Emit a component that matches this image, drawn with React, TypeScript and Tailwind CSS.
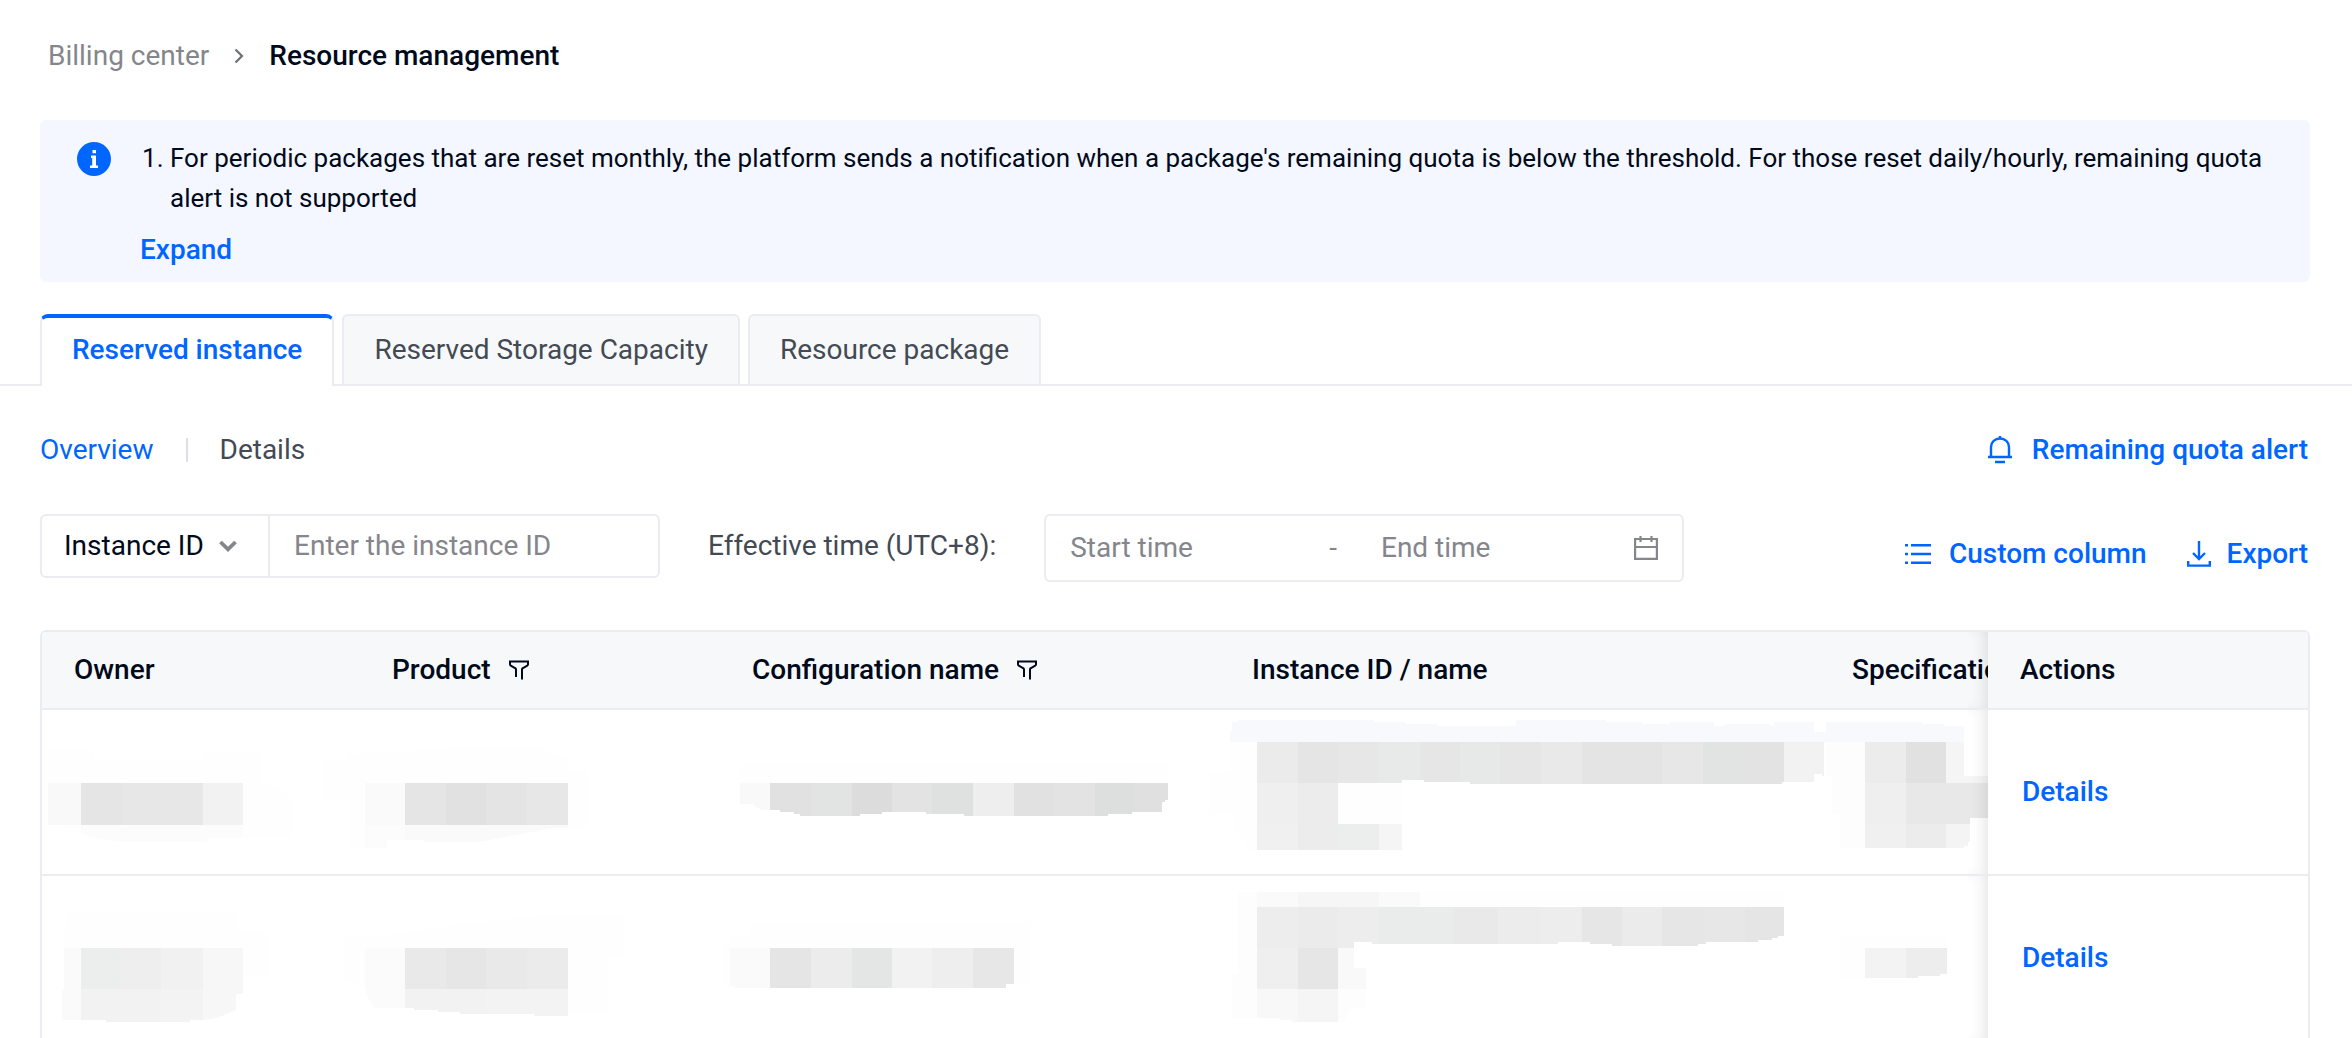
import React, { useId } from 'react';

type Tile = [x: number, y: number, w: number, h: number, fill: string];

interface MosaicProps {
  label: string;
  clip: string;
  tiles: Tile[];
}

// Pixelated block that hides a private value
const Mosaic: React.FC<MosaicProps> = ({ label, clip, tiles }) => {
  const id = useId();
  return (
    <svg role="img" aria-label={label} className="block h-[164px] w-full overflow-visible" shapeRendering="crispEdges">
      <clipPath id={id}><path d={clip} /></clipPath>
      <g clipPath={`url(#${id})`}>
        {tiles.map(([x, y, w, h, fill]) => <rect key={`${x}-${y}`} x={x} y={y} width={w} height={h} fill={fill} />)}
      </g>
    </svg>
  );
};

const rows: MosaicProps[][] = [
  [
    {
      label: 'Hidden owner',
      clip: 'M6 40H52V51H161V43H218V70L250 87V128H165V132H78L50 128L25 118V115H6Z',
      tiles: [
        [6, 40, 245, 100, '#fefefe'], [39, 115, 162, 17, '#fcfcfc'],
        [6, 73, 33, 42, '#f9f9f9'], [39, 73, 41, 42, '#e5e5e5'], [80, 73, 81, 42, '#e7e7e7'], [161, 73, 40, 42, '#f2f2f2'],
      ],
    },
    {
      label: 'Hidden product',
      clip: 'M-37 50H-13V44L100 38H182L208 50V60H228V118H196L172 122L150 126L130 130L118 132H64V130H27V138H-10V90H-37Z',
      tiles: [
        [-37, 38, 266, 100, '#fefefe'], [5, 115, 40, 23, '#fcfcfc'], [45, 115, 163, 20, '#fafafa'],
        [5, 73, 40, 42, '#fafafa'], [45, 73, 41, 42, '#e5e5e5'], [86, 73, 40, 42, '#e1e1e1'], [126, 73, 41, 42, '#e4e4e4'], [167, 73, 41, 42, '#e7e7e7'],
      ],
    },
    {
      label: 'Hidden configuration name',
      clip: 'M20 54H448V90H445V92H442V102H412V104H388V106H244V104H206V102H162V104H140V106H80V104H74V102H60V100H40V98H36V96H34V94H20Z',
      tiles: [
        [20, 54, 428, 19, '#fefefe'],
        [20, 73, 30, 33, '#f9f9f9'], [50, 73, 41, 33, '#e1e1e1'], [91, 73, 41, 33, '#e1e4e3'], [132, 73, 40, 33, '#dcdcdc'],
        [172, 73, 40, 33, '#e3e3e3'], [212, 73, 41, 33, '#dee1e0'], [253, 73, 41, 33, '#eeeeee'], [294, 73, 40, 33, '#e1e1e1'],
        [334, 73, 41, 33, '#e3e3e3'], [375, 73, 40, 33, '#dcdfde'], [415, 73, 33, 33, '#e0e0e0'],
      ],
    },
    {
      label: 'Hidden instance',
      clip: 'M10 21H12V12H18V10H154V12H186V14H218V16H296V10H386V12H422V14H450V12H494V16H504V14H550V16H554V12H594V22H606V66H602V64H594V72H562V74H250V72H204V70H182V140H30L14 120V104H-10V63H10Z',
      tiles: [
        [10, 10, 596, 22, '#f7f9fc'], [-10, 32, 47, 108, '#fefefe'], [118, 73, 64, 41, '#fefefe'],
        [37, 32, 41, 41, '#ebebeb'], [78, 32, 40, 41, '#e5e5e5'], [118, 32, 41, 41, '#e7e7e7'], [159, 32, 41, 41, '#e7eae9'],
        [200, 32, 40, 42, '#e6e6e6'], [240, 32, 40, 42, '#e6e9e8'], [280, 32, 41, 42, '#e6e6e6'], [321, 32, 41, 42, '#e9e9e9'],
        [362, 32, 80, 42, '#e4e4e4'], [442, 32, 41, 42, '#e7e7e7'], [483, 32, 38, 42, '#e1e4e2'], [521, 32, 43, 42, '#e3e3e3'], [564, 32, 40, 42, '#f2f2f2'],
        [37, 73, 41, 41, '#efefef'], [78, 73, 40, 67, '#ececec'], [37, 114, 41, 26, '#f0f0f0'], [118, 114, 41, 26, '#ebeeed'], [159, 114, 23, 26, '#f5f5f5'],
      ],
    },
    {
      label: 'Hidden specification',
      clip: 'M6 12H102V14H124V16H144V66H168V108H150V132H148V136H144V138H20V104H12V66H6Z',
      tiles: [
        [6, 12, 138, 20, '#f7f9fc'], [6, 32, 39, 106, '#fdfdfd'],
        [45, 32, 41, 41, '#ececec'], [86, 32, 40, 41, '#e1e1e1'], [126, 32, 42, 41, '#f5f5f5'],
        [45, 73, 41, 41, '#efefef'], [86, 73, 82, 41, '#e8e8e8'],
        [45, 114, 41, 24, '#f0f0f0'], [86, 114, 40, 24, '#ececec'], [126, 114, 24, 24, '#f4f4f4'],
      ],
    },
  ],
  [
    {
      label: 'Hidden owner',
      clip: 'M25 37H194V56H226V100H201V118H194V134L175 142L161 144H148V146H64V144H20V102H22V60Z',
      tiles: [
        [20, 37, 206, 70, '#fefefe'], [20, 113, 19, 33, '#fafafa'],
        [22, 72, 17, 41, '#fafafa'], [39, 72, 39, 41, '#ebeeed'], [78, 72, 41, 41, '#eeeeee'], [119, 72, 42, 41, '#f1f1f1'], [161, 72, 40, 41, '#f7f7f7'],
        [39, 113, 80, 33, '#f2f2f2'], [119, 113, 42, 33, '#f3f3f3'], [161, 113, 40, 33, '#f7f7f7'],
      ],
    },
    {
      label: 'Hidden product',
      clip: 'M-15 61H20L100 48L180 40H265V82H248V138H208V140H174V138H100V136H78V134H54V132H14L6 118V110L-15 104Z',
      tiles: [
        [-15, 40, 280, 100, '#fefefe'], [5, 72, 40, 60, '#fbfbfb'],
        [45, 72, 41, 41, '#e9e9e9'], [86, 72, 40, 41, '#e6e6e6'], [126, 72, 41, 41, '#e9e9e9'], [167, 72, 41, 41, '#ebebeb'],
        [45, 113, 81, 27, '#f2f2f2'], [126, 113, 82, 27, '#f3f3f3'],
      ],
    },
    {
      label: 'Hidden configuration name',
      clip: 'M30 46H310V108H286V112H14V110H3V70H10V60H30Z',
      tiles: [
        [3, 46, 311, 66, '#fefefe'], [10, 72, 40, 40, '#fafafa'],
        [50, 72, 41, 40, '#e5e5e5'], [91, 72, 41, 40, '#ececec'], [132, 72, 40, 40, '#e3e6e5'],
        [172, 72, 40, 40, '#f2f2f2'], [212, 72, 41, 40, '#eeeeee'], [253, 72, 41, 40, '#e7e7e7'],
      ],
    },
    {
      label: 'Hidden instance',
      clip: 'M18 16H564V60H558V62H552V64H538V66H486V68H478V70H392V68H370V66H338V68H152V66H134V92H146V132H130L124 146H72V144H60V142H12V98H18Z',
      tiles: [
        [12, 16, 25, 130, '#fdfdfd'], [200, 16, 364, 15, '#fefefe'], [118, 113, 28, 33, '#fdfdfd'],
        [37, 16, 41, 15, '#fafafa'], [78, 16, 81, 15, '#f6f6f6'], [159, 16, 41, 15, '#fafafa'],
        [37, 31, 41, 41, '#ededed'], [78, 31, 40, 41, '#ebebeb'], [118, 31, 41, 41, '#ededed'], [159, 31, 74, 41, '#e9eceb'],
        [233, 31, 45, 41, '#e9e9e9'], [278, 31, 43, 41, '#ececec'], [321, 31, 41, 41, '#ededed'], [362, 31, 40, 41, '#e6e6e6'],
        [402, 31, 40, 41, '#ebebeb'], [442, 31, 41, 41, '#e6e6e6'], [483, 31, 42, 41, '#e7e7e7'], [525, 31, 39, 41, '#e5e5e5'],
        [37, 72, 41, 41, '#efefef'], [78, 72, 40, 41, '#e6e6e6'], [118, 72, 28, 41, '#f9f9f9'],
        [37, 113, 41, 33, '#f8f8f8'], [78, 113, 40, 33, '#f5f5f5'],
      ],
    },
    {
      label: 'Hidden specification',
      clip: 'M20 60H127V98H120V100H98V102H20Z',
      tiles: [
        [20, 60, 107, 42, '#fefefe'], [45, 72, 41, 30, '#f3f3f3'], [86, 72, 41, 30, '#ededed'],
      ],
    },
  ],
];

const columns = [
  { name: 'Owner', filter: false },
  { name: 'Product', filter: true },
  { name: 'Configuration name', filter: true },
  { name: 'Instance ID / name', filter: false },
  { name: 'Specifications', filter: false },
];

const FilterIcon = () => (
  <svg width="20" height="20" viewBox="0 0 20 20" fill="none" stroke="currentColor" strokeWidth="2">
    <path d="M7 17V9.5Q7 8.5 6 8L1.8 5.6Q1 5 1 4.2V1.5H19V4.2Q19 5 18.2 5.6L14 8Q13 8.5 13 9.5V19.5" />
  </svg>
);

const BellIcon = () => (
  <svg width="24" height="28" viewBox="0 0 24 28" fill="none" stroke="currentColor" strokeWidth="2.4">
    <path d="M12 0V3M3 21V11A9 8.5 0 0 1 21 11V21M0 21H24M7 26H17" />
  </svg>
);

const ListIcon = () => (
  <svg width="26" height="20" viewBox="0 0 26 20" fill="currentColor">
    <path d="M0 0h3v2.4H0zM6 0h20v2.4H6zM0 8.8h3v2.4H0zM6 8.8h20v2.4H6zM0 17.6h3V20H0zM6 17.6h20V20H6z" />
  </svg>
);

const DownloadIcon = () => (
  <svg width="24" height="26" viewBox="0 0 24 26" fill="none" stroke="currentColor" strokeWidth="2.4">
    <path d="M12 0V17.5M6 12L12 18L18 12M1.2 20V24.6H22.8V20" />
  </svg>
);

const CalendarIcon = () => (
  <svg width="24" height="24" viewBox="0 0 24 24" fill="none" stroke="currentColor" strokeWidth="2.2">
    <path d="M1.1 3H22.9V22.9H1.1ZM1 11H23M6.5 0V6M17.5 0V6" />
  </svg>
);

const shadow = 'relative before:absolute before:inset-y-0 before:right-full before:w-5 before:shadow-[inset_-10px_0_16px_-8px_rgba(0,0,0,0.12)]';
const linkButton = 'flex items-center text-[28px] leading-10 font-medium text-[#0066ff]';

const App: React.FC = () => {
  return (
    <div className="h-screen overflow-hidden bg-white font-['Roboto',sans-serif] text-[28px] leading-10 text-[#000a1a]">
      {/* Breadcrumb */}
      <nav aria-label="Breadcrumb" className="flex items-center px-12 pt-9">
        <a href="#billing" className="text-[#84868c]">Billing center</a>
        <svg className="mx-[25px]" width="10" height="16" viewBox="0 0 10 16" fill="none" stroke="#6b6f78" strokeWidth="2.2"><path d="M1.5 1.5L8 8L1.5 14.5" /></svg>
        <span className="font-medium" aria-current="page">Resource management</span>
      </nav>

      {/* Notice */}
      <section className="mt-11 mr-[42px] ml-10 flex rounded-md bg-[#f4f7ff] pt-[18px] pr-8 pb-3 pl-[37px]">
        <svg className="mt-1 shrink-0" width="34" height="34" viewBox="0 0 34 34">
          <circle cx="17" cy="17" r="17" fill="#0066ff" />
          <path d="M15.5 8H19V11.3H15.5ZM14 13.5H19V23.5H21V26H13V23.5H15.2V16H14Z" fill="#fff" />
        </svg>
        <div className="ml-[29px]">
          <ol className="list-decimal pl-[30px] text-[26px] leading-10">
            <li>For periodic packages that are reset monthly, the platform sends a notification when a package's remaining quota is below the threshold. For those reset daily/hourly, remaining quota alert is not supported</li>
          </ol>
          <button type="button" className="mt-3 font-medium text-[#0066ff]">Expand</button>
        </div>
      </section>

      {/* Tabs */}
      <div role="tablist" className="mt-8 flex items-end border-b-2 border-[#ebecf1] pl-10">
        <button type="button" role="tab" aria-selected="true" className="-mb-0.5 h-[72px] rounded-t-lg border-x-2 border-t-4 border-x-[#ebecf1] border-t-[#0066ff] bg-white px-[30px] pb-1 font-medium text-[#0066ff]">Reserved instance</button>
        <button type="button" role="tab" aria-selected="false" className="ml-2 h-[70px] rounded-t-md border-x-2 border-t-2 border-[#ebecf1] bg-[#f7f8fa] px-[30px] text-[#434a54]">Reserved Storage Capacity</button>
        <button type="button" role="tab" aria-selected="false" className="ml-2 h-[70px] rounded-t-md border-x-2 border-t-2 border-[#ebecf1] bg-[#f7f8fa] px-[30px] text-[#434a54]">Resource package</button>
      </div>

      <main className="mr-[42px] ml-10">
        <div className="mt-11 flex items-center justify-between pr-0.5">
          <div className="flex items-center">
            <a href="#overview" className="text-[#0066ff]">Overview</a>
            <span className="mx-8 h-6 w-0.5 bg-[#dcdfe6]" />
            <a href="#details" className="text-[#434a54]">Details</a>
          </div>
          <button type="button" className={linkButton}><BellIcon /><span className="ml-5">Remaining quota alert</span></button>
        </div>

        {/* Filters */}
        <div className="mt-11 flex items-start justify-between pr-0.5">
          <div className="flex items-start">
            <div className="flex h-16 w-[620px] items-stretch rounded-md border-2 border-[#ebecf1]">
              <div className="flex w-[228px] items-center border-r-2 border-[#ebecf1]">
                <select aria-label="Search field" className="w-[177px] appearance-none bg-transparent pl-[22px] outline-none">
                  <option>Instance ID</option>
                </select>
                <svg width="18" height="12" viewBox="0 0 18 12" fill="none" stroke="#84868c" strokeWidth="3.8"><path d="M1.5 2L9 9.3L16.5 2" /></svg>
              </div>
              <input type="text" aria-label="Instance ID" placeholder="Enter the instance ID" className="min-w-0 flex-1 bg-transparent px-6 outline-none placeholder:text-[#84868c]" />
            </div>
            <label htmlFor="start" className="mt-3 ml-12 text-[#434a54]">Effective time (UTC+8):</label>
            <div className="ml-12 flex h-[68px] w-[640px] items-center rounded-md border-2 border-[#ebecf1] px-6 text-[#84868c]">
              <input id="start" type="text" placeholder="Start time" className="w-[259px] bg-transparent outline-none placeholder:text-[#84868c]" />
              <span>-</span>
              <input type="text" aria-label="End time" placeholder="End time" className="ml-11 min-w-0 flex-1 bg-transparent outline-none placeholder:text-[#84868c]" />
              <CalendarIcon />
            </div>
          </div>
          <div className="mt-5 flex items-center">
            <button type="button" className={linkButton}><ListIcon /><span className="ml-[18px]">Custom column</span></button>
            <button type="button" className={`${linkButton} ml-10`}><DownloadIcon /><span className="ml-4">Export</span></button>
          </div>
        </div>

        {/* Instances */}
        <div className="mt-12 overflow-hidden rounded-md border-2 border-[#ebecf1]">
          <table className="w-full table-fixed border-separate border-spacing-0">
            <colgroup>
              <col className="w-[318px]" />
              <col className="w-[360px]" />
              <col className="w-[500px]" />
              <col className="w-[600px]" />
              <col />
              <col className="w-[320px]" />
            </colgroup>
            <thead>
              <tr className="h-[78px] bg-[#f7f8fa] text-left">
                {columns.map(c => (
                  <th key={c.name} scope="col" className="overflow-hidden border-b-2 border-[#ebecf1] pl-8 font-medium whitespace-nowrap">
                    <div className="flex items-center gap-[18px]">{c.name}{c.filter && <button type="button" aria-label={`Filter by ${c.name}`}><FilterIcon /></button>}</div>
                  </th>
                ))}
                <th scope="col" className={`${shadow} border-b-2 border-[#ebecf1] bg-[#f7f8fa] pl-8 font-medium`}>Actions</th>
              </tr>
            </thead>
            <tbody>
              {rows.map((cells, i) => (
                <tr key={i}>
                  {cells.map(cell => <td key={cell.label} className="border-b-2 border-[#ebecf1] p-0"><Mosaic {...cell} /></td>)}
                  <td className={`${shadow} border-b-2 border-[#ebecf1] bg-white pl-[34px]`}><a href="#details" className="font-medium text-[#0066ff]">Details</a></td>
                </tr>
              ))}
            </tbody>
          </table>
        </div>
      </main>
    </div>
  );
};

export default App;
